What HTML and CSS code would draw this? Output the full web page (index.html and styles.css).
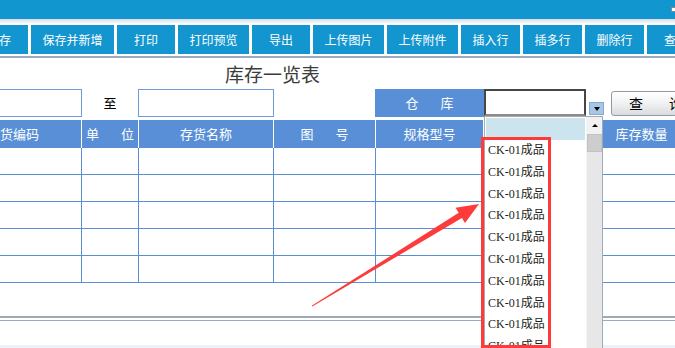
FILE: index.html
```html
<!DOCTYPE html>
<html lang="zh-CN">
<head>
    <meta charset="UTF-8">
    <meta name="viewport" content="width=device-width, initial-scale=1.0">
    <title>库存一览表</title>
    <link rel="stylesheet" href="styles.css">
</head>
<body>
    <div class="topbar"><span class="win-btn"></span></div>

    <div class="page">
        <div class="toolbar">
            <button class="tool">保存</button>
            <button class="tool">保存并新增</button>
            <button class="tool">打印</button>
            <button class="tool">打印预览</button>
            <button class="tool">导出</button>
            <button class="tool">上传图片</button>
            <button class="tool">上传附件</button>
            <button class="tool">插入行</button>
            <button class="tool">插多行</button>
            <button class="tool">删除行</button>
            <button class="tool">查找</button>
        </div>

        <h1 class="title">库存一览表</h1>

        <div class="filter">
            <input type="text" class="field field-from">
            <span class="to">至</span>
            <input type="text" class="field field-to">
            <span class="label"><span class="wide">仓库</span></span>
            <div class="select"></div>
            <span class="select-arrow"></span>
            <button class="query"><span class="wide wide-q">查询</span></button>
        </div>

        <div class="grid">
            <div class="row head">
                <div class="cell">存货编码</div>
                <div class="cell"><span class="wide">单位</span></div>
                <div class="cell">存货名称</div>
                <div class="cell"><span class="wide">图号</span></div>
                <div class="cell">规格型号</div>
                <div class="cell">仓库</div>
                <div class="cell">库存数量</div>
            </div>
            <div class="row"><div class="cell"></div><div class="cell"></div><div class="cell"></div><div class="cell"></div><div class="cell"></div><div class="cell"></div><div class="cell"></div></div>
            <div class="row"><div class="cell"></div><div class="cell"></div><div class="cell"></div><div class="cell"></div><div class="cell"></div><div class="cell"></div><div class="cell"></div></div>
            <div class="row"><div class="cell"></div><div class="cell"></div><div class="cell"></div><div class="cell"></div><div class="cell"></div><div class="cell"></div><div class="cell"></div></div>
            <div class="row"><div class="cell"></div><div class="cell"></div><div class="cell"></div><div class="cell"></div><div class="cell"></div><div class="cell"></div><div class="cell"></div></div>
            <div class="row"><div class="cell"></div><div class="cell"></div><div class="cell"></div><div class="cell"></div><div class="cell"></div><div class="cell"></div><div class="cell"></div></div>
        </div>

        <div class="rule"></div>
        <div class="band"></div>
    </div>

    <!-- open warehouse list -->
    <div class="dropdown">
        <div class="options">
            <div class="opt selected"></div>
            <div class="opt">CK-01成品</div>
            <div class="opt">CK-01成品</div>
            <div class="opt">CK-01成品</div>
            <div class="opt">CK-01成品</div>
            <div class="opt">CK-01成品</div>
            <div class="opt">CK-01成品</div>
            <div class="opt">CK-01成品</div>
            <div class="opt">CK-01成品</div>
            <div class="opt">CK-01成品</div>
            <div class="opt">CK-01成品</div>
        </div>
        <div class="scrollbar">
            <div class="sb-up"></div>
            <div class="sb-thumb"></div>
        </div>
    </div>

    <!-- annotation -->
    <div class="callout"></div>
    <svg class="pointer" width="675" height="348" viewBox="0 0 675 348">
        <polygon points="312.3,306.6 461.9,218.0 465.0,223.1 479,204 455.6,207.7 458.7,212.8 311.7,305.8" fill="#fd3b3b"/>
    </svg>
</body>
</html>
```

FILE: styles.css
```css
* {
    box-sizing: border-box;
}
html, body {
    margin: 0;
    overflow: hidden;
}
body {
    width: 675px;
    height: 348px;
    position: relative;
    font-family: "Noto Sans CJK SC", sans-serif;
    background: #fff;
}
.topbar {
    height: 19px;
    background: #1296cf;
    display: flex;
    justify-content: flex-end;
    align-items: flex-start;
}
.win-btn {
    width: 6px;
    height: 5px;
    margin-top: 7px;
    margin-right: -2px;
    background: #fff;
    border: 1px solid #8a8a8a;
}
.page {
    width: 760px;
    margin-left: -55px;
}
.toolbar {
    display: flex;
    gap: 3px;
    padding: 6px 0 2px 25px;
    background: linear-gradient(#d3dde7, #fff 5px);
    border-bottom: 2px solid #9caab9;
}
.tool {
    height: 29px;
    min-width: 58px;
    padding: 0 11.5px;
    border: 0;
    background: #1396cf;
    color: #fff;
    font-family: "Noto Sans CJK SC", sans-serif;
    font-size: 12px;
    line-height: 29px;
    white-space: nowrap;
}
.title {
    margin: 0;
    height: 31px;
    padding-left: 280px;
    font-size: 19px;
    font-weight: normal;
    line-height: 31px;
    color: #3c3c3c;
}
.filter {
    display: flex;
    align-items: flex-start;
    height: 28px;
}
.field {
    height: 28px;
    border: 1px solid #6c9bd8;
    outline: none;
    background: #fff;
}
.field-from {
    width: 137px;
}
.field-to {
    width: 136px;
}
.to {
    width: 56px;
    text-align: center;
    font-size: 13px;
    line-height: 28px;
    color: #000;
}
.label {
    width: 109px;
    height: 28px;
    margin-left: 101px;
    background: #588fd6;
    color: #fff;
    font-size: 13px;
    line-height: 28px;
    text-align: center;
}
.wide {
    letter-spacing: 22px;
    margin-right: -22px;
}
.select {
    width: 102px;
    height: 27px;
    background: #fff;
    border: 2px solid #464646;
    border-bottom-color: #8c8c8c;
}
.select-arrow {
    width: 15px;
    height: 13px;
    margin: 13px 0 0 3px;
    background: #a7c7e5;
    border: 1px solid #86acd4;
    display: flex;
    justify-content: center;
    align-items: center;
}
.select-arrow::after {
    content: "";
    border-left: 3px solid transparent;
    border-right: 3px solid transparent;
    border-top: 4px solid #000;
}
.query {
    width: 80px;
    height: 25px;
    margin: 2px 0 0 7px;
    padding: 0 0 0 17px;
    border: 1px solid #8e9aa6;
    border-radius: 3px;
    background: linear-gradient(#ffffff, #f2f3f4 45%, #d9dbde);
    font-family: "Noto Sans CJK SC", sans-serif;
    font-size: 14px;
    line-height: 23px;
    text-align: left;
    white-space: nowrap;
    color: #000;
}
.wide-q {
    letter-spacing: 26px;
}
.grid {
    margin-top: 3px;
}
.row {
    display: grid;
    grid-template-columns: 137px 57px 135px 102px 108px 119px 78px;
    height: 27px;
    border-bottom: 1px solid #588fd6;
}
.row .cell {
    border-right: 1px solid #588fd6;
}
.row.head {
    height: 28px;
    border-bottom: 0;
    background: #588fd6;
}
.row.head .cell {
    border-right-color: #fff;
    color: #fff;
    font-size: 13px;
    line-height: 27px;
    text-align: center;
    white-space: nowrap;
}
.rule {
    margin-top: 33px;
    height: 5px;
    border-top: 2px solid #9caab9;
    border-bottom: 1px solid #9caab9;
}
.band {
    margin-top: 24px;
    height: 12px;
    background: #edf1f8;
}
.dropdown {
    position: absolute;
    left: 484px;
    top: 116px;
    width: 119px;
    height: 240px;
    display: flex;
    background: #fff;
    border: 1px solid #a9a9a9;
    border-right-color: #9caab9;
}
.options {
    flex: 1;
    padding: 1px 1px 0;
}
.opt {
    height: 21.8px;
    padding-left: 2px;
    font-family: "Liberation Serif", "Noto Sans CJK SC", serif;
    font-size: 12px;
    line-height: 21.8px;
    color: #231f1a;
    white-space: nowrap;
}
.opt.selected {
    height: 22px;
    background: #cbe4ee;
}
.scrollbar {
    width: 16px;
    background: #e7e7e7;
    border-left: 1px solid #f4f4f4;
}
.sb-up {
    height: 17px;
    background: #f1f1f1;
    display: flex;
    justify-content: center;
    align-items: center;
}
.sb-up::after {
    content: "";
    border-left: 3px solid transparent;
    border-right: 3px solid transparent;
    border-bottom: 3px solid #000;
}
.sb-thumb {
    height: 18px;
    background: #cdcdcd;
    border: 1px solid #c2c2c2;
}
.callout {
    position: absolute;
    left: 481px;
    top: 137px;
    width: 70px;
    height: 211px;
    border: 3px solid #fd3b3b;
}
.pointer {
    position: absolute;
    left: 0;
    top: 0;
    pointer-events: none;
}
```
